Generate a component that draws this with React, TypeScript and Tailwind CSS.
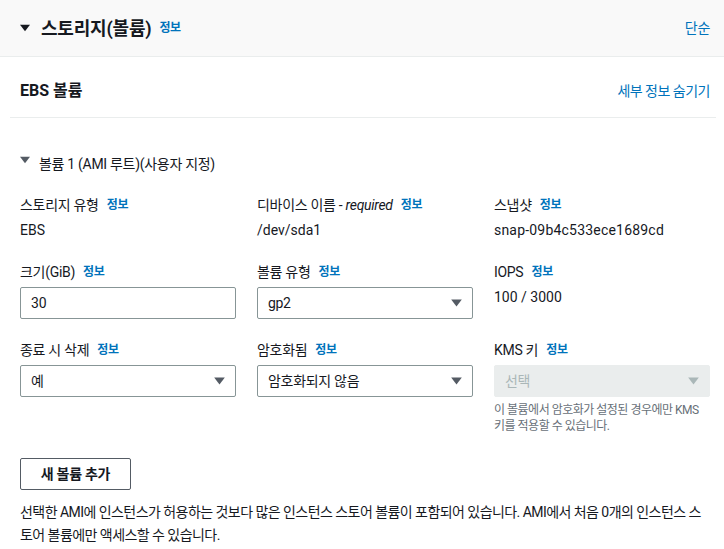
import * as React from "react";

const FONT = { fontFamily: 'Roboto, "Noto Sans CJK KR", sans-serif' };

function Info() {
  return <span className="ml-2 text-[12px] font-bold tracking-[-0.3px] text-[#0073bb]">정보</span>;
}

function Caret({ color = "#545b64", w = 11, h = 8 }: { color?: string; w?: number; h?: number }) {
  return (
    <svg width={w} height={h} viewBox="0 0 12 9">
      <path d="M0 0.5h12L6 8.5z" fill={color} />
    </svg>
  );
}

function Field({ label, children }: { label: React.ReactNode; children: React.ReactNode }) {
  return (
    <div className="flex flex-col">
      <div className="flex h-[22px] items-center text-[14px] tracking-[-0.3px] text-[#16191f]">{label}</div>
      <div className="mt-[4px]">{children}</div>
    </div>
  );
}

function Select({ value, disabled }: { value: string; disabled?: boolean }) {
  return (
    <div
      className={
        disabled
          ? "flex h-[32px] items-center justify-between rounded-[2px] border border-[#eaeded] bg-[#eaeded] pl-[10px] pr-[10px] text-[14px] text-[#aab7b8]"
          : "flex h-[32px] items-center justify-between rounded-[2px] border border-[#879596] bg-white pl-[10px] pr-[10px] text-[14px] text-[#16191f]"
      }
    >
      <span className="tracking-[-0.3px]">{value}</span>
      <Caret color={disabled ? "#aab7b8" : "#545b64"} />
    </div>
  );
}

export default function App() {
  return (
    <div className="h-[549px] w-[724px] overflow-hidden bg-white text-[#16191f]" style={FONT}>
      <div className="flex h-[57px] items-center justify-between border-b border-[#eaeded] bg-[#f9f9f9] pl-[20px] pr-[14px]">
        <div className="flex items-center">
          <Caret color="#16191f" w={10} h={8} />
          <span className="ml-[11px] text-[18px] font-bold tracking-[-0.2px]">스토리지(볼륨)</span>
          <Info />
        </div>
        <span className="text-[14px] tracking-[-0.3px] text-[#0073bb]">단순</span>
      </div>

      <div className="flex items-center justify-between pb-[14px] pl-[20px] pr-[14px] pt-[22px]">
        <span className="text-[16px] font-bold leading-[24px]">EBS 볼륨</span>
        <span className="text-[14px] tracking-[-0.5px] text-[#0073bb]">세부 정보 숨기기</span>
      </div>
      <div className="ml-[10px] mr-[8px] border-t border-[#eaeded]" />

      <div className="pl-[20px] pr-[14px]">
        <div className="mt-[36px] flex items-center">
          <span className="-mt-[9px]">
            <Caret color="#545b64" w={10} h={8} />
          </span>
          <span className="ml-[9px] text-[14px] tracking-[-0.3px]">볼륨 1 (AMI 루트)(사용자 지정)</span>
        </div>

        <div className="mt-[19px] grid grid-cols-3 gap-x-[21px]">
          <Field label={<>스토리지 유형<Info /></>}>
            <div className="text-[14px]">EBS</div>
          </Field>
          <Field
            label={
              <>
                디바이스 이름 -&nbsp;<i>required</i>
                <Info />
              </>
            }
          >
            <div className="text-[14px]">/dev/sda1</div>
          </Field>
          <Field label={<>스냅샷<Info /></>}>
            <div className="text-[14px] tracking-[0.2px]">snap-09b4c533ece1689cd</div>
          </Field>
        </div>

        <div className="mt-[20px] grid grid-cols-3 gap-x-[21px]">
          <Field label={<>크기(GiB)<Info /></>}>
            <div className="flex h-[32px] items-center rounded-[2px] border border-[#879596] pl-[10px] text-[14px]">30</div>
          </Field>
          <Field label={<>볼륨 유형<Info /></>}>
            <Select value="gp2" />
          </Field>
          <Field label={<>IOPS<Info /></>}>
            <div className="text-[14px]">100 / 3000</div>
          </Field>
        </div>

        <div className="mt-[20px] grid grid-cols-3 gap-x-[21px]">
          <Field label={<>종료 시 삭제<Info /></>}>
            <Select value="예" />
          </Field>
          <Field label={<>암호화됨<Info /></>}>
            <Select value="암호화되지 않음" />
          </Field>
          <Field label={<>KMS 키<Info /></>}>
            <Select value="선택" disabled />
            <p className="mt-[5px] text-[12px] leading-[16px] tracking-[-0.5px] text-[#687078]">
              이 볼륨에서 암호화가 설정된 경우에만 KMS 키를 적용할 수 있습니다.
            </p>
          </Field>
        </div>

        <button className="mt-[24px] h-[32px] w-[111px] rounded-[2px] border border-[#545b64] text-[14px] font-bold tracking-[-0.3px] text-[#16191f]">
          새 볼륨 추가
        </button>

        <p className="mt-[11px] text-[14px] leading-[23px] tracking-[-0.55px]">
          선택한 AMI에 인스턴스가 허용하는 것보다 많은 인스턴스 스토어 볼륨이 포함되어 있습니다. AMI에서 처음 0개의 인스턴스 스토어 볼륨에만 액세스할 수 있습니다.
        </p>
      </div>
    </div>
  );
}
